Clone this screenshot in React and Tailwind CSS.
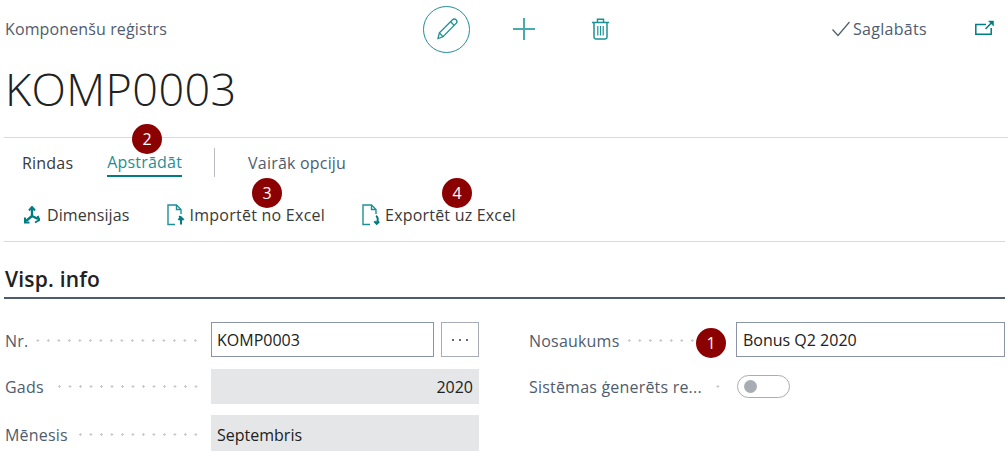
const font = { fontFamily: '"Open Sans", "Noto Sans", sans-serif' }

function Badge({ n, className }) {
  return (
    <span className={`absolute flex h-[30px] w-[30px] items-center justify-center rounded-full bg-[#8b0000] text-[16px] leading-none text-white ${className}`}>
      {n}
    </span>
  )
}

function FileIcon({ down }) {
  return (
    <svg width="18" height="22" viewBox="0 0 18 22" fill="none" stroke="#1f8f96" strokeWidth="1.4">
      <path d="M8 20.5H1V1h8.5L14 5.5V10" />
      <path d="M9.5 1v4.5H14" />
      {down ? (
        <path d="M14 12c2.2 1 2.2 4 .8 7M12.3 17.2l2.4 2.6 2.5-2.3" stroke="#007c83" strokeWidth="2" />
      ) : (
        <path d="M14 20.5v-6.5c0-1-1-1.5-2-1M11.4 16l2.6-2.6 2.6 2.6" stroke="#007c83" strokeWidth="2" />
      )}
    </svg>
  )
}

function Field({ label, children, dotsClass = 'w-[192px]' }) {
  return (
    <div className="flex h-[35px] items-center">
      <div className={`flex items-center text-[16px] tracking-[0.2px] text-[#505c6d] ${dotsClass}`}>
        <span className="whitespace-nowrap">{label}</span>
        <span className="ml-2 h-[3px] flex-1 bg-[radial-gradient(circle,#c3c7cd_1px,transparent_1.2px)] bg-[length:10.5px_3px] bg-right bg-repeat-x" />
      </div>
      {children}
    </div>
  )
}

export default function App() {
  return (
    <div className="relative h-[458px] w-[1008px] overflow-hidden bg-white pl-1 text-[#212121]" style={font}>

      {/* Header */}
      <div className="flex h-[54px] items-center pt-1">
        <span className="ml-px w-[418px] text-[16px] tracking-[0.12px] text-[#505c6d]">Komponenšu reģistrs</span>
        <div className="flex h-[47px] w-[47px] items-center justify-center rounded-full border border-[#1f8f96]">
          <svg width="24" height="24" viewBox="0 0 24 24" fill="none" stroke="#1f8f96" strokeWidth="1.3">
            <path d="M3 21.5l1.4-5.6L17.5 2.8c1-1 2.6-1 3.6 0s1 2.6 0 3.6L8 19.8z" />
            <path d="M4.4 15.9l3.6 3.9M15.6 4.8l3.6 3.6" />
          </svg>
        </div>
        <svg className="ml-[43px]" width="22" height="22" viewBox="0 0 22 22" stroke="#4aa9ae" strokeWidth="2">
          <path d="M0 11h22M11 0v22" />
        </svg>
        <svg className="ml-[57px]" width="17" height="22" viewBox="0 0 17 22" fill="none" stroke="#1f8f96" strokeWidth="1.5">
          <path d="M0 4.5h17M5.5 4.5V1.2h6v3.3M2 4.5v14.8c0 1 .7 1.7 1.7 1.7h9.6c1 0 1.7-.7 1.7-1.7V4.5" />
          <path d="M5.8 8v9.5M8.5 8v9.5M11.2 8v9.5" strokeWidth="1.2" />
        </svg>
        <svg className="ml-[223px]" width="18" height="16" viewBox="0 0 18 16" fill="none" stroke="#505c6d" strokeWidth="1.2">
          <path d="M.5 8.5l5.5 6L17.5 1" />
        </svg>
        <span className="ml-[3px] text-[16px] tracking-[0.3px] text-[#505c6d]">Saglabāts</span>
        <svg className="mb-1 ml-[48px]" width="19" height="15" viewBox="0 0 19 15" fill="none" stroke="#007c83" strokeWidth="1.5">
          <path d="M11 4.5H.8v9.7h15.4V8" />
          <path d="M10.5 9L17 2.2" />
          <path d="M13.5 1h5v5z" fill="#007c83" strokeWidth="0.5" />
        </svg>
      </div>

      {/* Title */}
      <h1 className="ml-px flex h-[83px] items-center pb-[15px] text-[45px] font-light leading-none tracking-[0.4px] text-[#212121]">KOMP0003</h1>

      {/* Tabs */}
      <div className="relative border-t border-[#d9dadc]">
        <div className="flex h-[39px] items-end pl-[18px] text-[16px] tracking-[0.2px]">
          <span className="pb-[2px] text-[#393939]">Rindas</span>
          <span className="ml-[34px] border-b-2 border-[#007c83] pb-[1px] text-[#1f8f96]">Apstrādāt</span>
          <span className="ml-[32px] h-[29px] w-px bg-[#b9bcc2]" />
          <span className="ml-[33px] pb-[2px] text-[#505c6d]">Vairāk opciju</span>
        </div>

        {/* Actions */}
        <div className="flex h-[64px] items-center pl-5 pt-3 text-[16px] text-[#393939]">
          <svg width="16" height="18" viewBox="0 0 16 18" fill="none" stroke="#007c83" strokeWidth="2.4">
            <path d="M8 2v8M8 10l-6 5M8 10l6 3" />
            <path d="M5 4.5L8 1l3 3.5M1 11.5v5h4.5M11 16.5l4.5-2.5-2-4" strokeWidth="2" />
          </svg>
          <span className="ml-[7px] tracking-[0.1px]">Dimensijas</span>
          <span className="ml-[38px]"><FileIcon /></span>
          <span className="ml-[4px] tracking-[0.25px]">Importēt no Excel</span>
          <span className="ml-[37px]"><FileIcon down /></span>
          <span className="ml-[5px] tracking-[0.2px]">Exportēt uz Excel</span>
        </div>
      </div>

      {/* General section */}
      <section className="mr-[3px] border-t border-[#d9dadc]">
        <h2 className="ml-px flex h-[55px] items-center pt-[21px] text-[21px] font-semibold tracking-[0.2px] text-[#212121]">Visp. info</h2>
        <div className="h-[2px] bg-[#505c6d]" />
        <div className="mt-[23px] flex">
          <div className="w-[475px] pl-px">
            <Field label="Nr." dotsClass="w-[206px] pr-[10px] pt-[2px]">
              <div className="flex h-[35px] w-[223px] items-center border border-[#8a94a6] pl-[5px] text-[16px]">KOMP0003</div>
              <div className="ml-[7px] flex h-[35px] w-[38px] items-center justify-center border border-[#a8adb5] text-[16px]">
                <svg width="18" height="4" viewBox="0 0 18 4" fill="#393939"><circle cx="2" cy="2" r="1" /><circle cx="9" cy="2" r="1" /><circle cx="16" cy="2" r="1" /></svg>
              </div>
            </Field>
            <div className="mt-3">
              <Field label="Gads" dotsClass="w-[206px] pr-[10px]">
                <div className="flex h-[35px] w-[268px] items-center justify-end bg-[#e5e6e8] px-[6px] text-[16px]">2020</div>
              </Field>
            </div>
            <div className="mt-[11px]">
              <Field label="Mēnesis" dotsClass="w-[206px] pr-[10px] pt-1">
                <div className="flex h-[36px] w-[268px] items-center bg-[#e5e6e8] px-[6px] pt-1 text-[16px]">Septembris</div>
              </Field>
            </div>
          </div>
          <div className="ml-[50px] flex-1">
            <Field label="Nosaukums" dotsClass="w-[207px] pr-[38px] pt-[2px]">
              <div className="flex h-[35px] flex-1 items-center border border-[#8a94a6] px-[6px] text-[16px]">Bonus Q2 2020</div>
            </Field>
            <div className="mt-3">
              <Field label="Sistēmas ģenerēts re..." dotsClass="w-[208px] pr-[14px]">
                <div className="flex h-[23px] w-[53px] items-center rounded-full border border-[#a8adb5] pl-[6px]">
                  <span className="h-[13px] w-[13px] rounded-full bg-[#a8adb5]" />
                </div>
              </Field>
            </div>
          </div>
        </div>
      </section>

      {/* Callouts */}
      <Badge n="1" className="left-[696px] top-[328px]" />
      <Badge n="2" className="left-[132px] top-[124px]" />
      <Badge n="3" className="left-[252px] top-[178px]" />
      <Badge n="4" className="left-[442px] top-[178px]" />
    </div>
  )
}
